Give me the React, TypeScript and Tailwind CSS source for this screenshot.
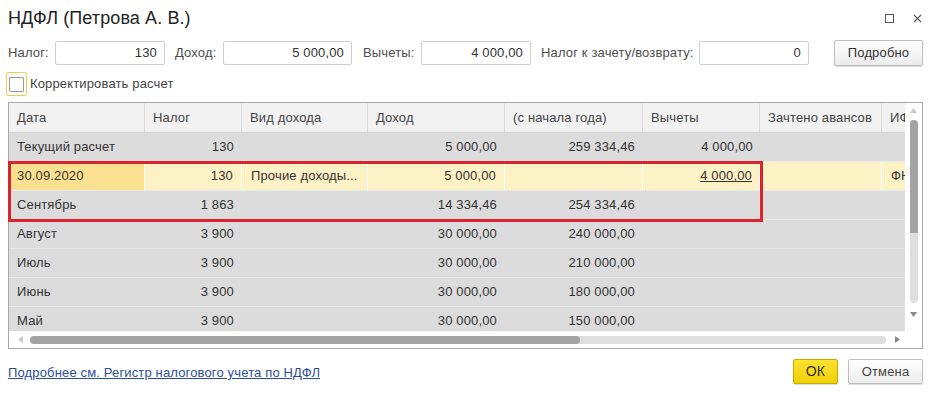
import React from "react";

type Row = {
  date: string;
  tax: string;
  kind?: string;
  income: string;
  ytd?: string;
  deductions?: string;
  advance?: string;
  ifns?: string;
  selected?: boolean;
};

const rows: Row[] = [
  { date: "Текущий расчет", tax: "130", income: "5 000,00", ytd: "259 334,46", deductions: "4 000,00" },
  { date: "30.09.2020", tax: "130", kind: "Прочие доходы...", income: "5 000,00", deductions: "4 000,00", ifns: "ФНС", selected: true },
  { date: "Сентябрь", tax: "1 863", income: "14 334,46", ytd: "254 334,46" },
  { date: "Август", tax: "3 900", income: "30 000,00", ytd: "240 000,00" },
  { date: "Июль", tax: "3 900", income: "30 000,00", ytd: "210 000,00" },
  { date: "Июнь", tax: "3 900", income: "30 000,00", ytd: "180 000,00" },
  { date: "Май", tax: "3 900", income: "30 000,00", ytd: "150 000,00" },
];

const headers = [
  { label: "Дата", w: "w-[136px]" },
  { label: "Налог", w: "w-[97px]" },
  { label: "Вид дохода", w: "w-[126px]" },
  { label: "Доход", w: "w-[137px]" },
  { label: "(с начала года)", w: "w-[138px]" },
  { label: "Вычеты", w: "w-[117px]" },
  { label: "Зачтено авансов", w: "w-[122px]" },
  { label: "ИФНС", w: "flex-1" },
];

const Field = ({ value, w }: { value: string; w: string }) => (
  <div className={`${w} h-[24px] border border-[#cfcfcf] rounded-[2px] bg-white flex items-center justify-end pr-[7px] text-[#333]`}>
    {value}
  </div>
);

const TableRow = ({ r }: { r: Row }) => {
  const bg = r.selected ? "bg-[#fdf1c6]" : "bg-[#dcdcdc]";
  const div = r.selected ? "border-r border-white" : "";
  return (
    <div className={`flex shrink-0 h-[29px] border-b border-[#e8e8e8] ${bg} text-[#333]`}>
      <div className={`w-[136px] shrink-0 flex items-center pl-[8px] ${r.selected ? "bg-[#fbe08f]" : ""} ${div}`}>{r.date}</div>
      <div className={`w-[97px] shrink-0 flex items-center justify-end pr-[8px] ${div}`}>{r.tax}</div>
      <div className={`w-[126px] shrink-0 flex items-center pl-[9px] ${div}`}>{r.kind}</div>
      <div className={`w-[137px] shrink-0 flex items-center justify-end pr-[8px] ${div}`}>{r.income}</div>
      <div className={`w-[138px] shrink-0 flex items-center justify-end pr-[8px] ${div}`}>{r.ytd}</div>
      <div className={`w-[117px] shrink-0 flex items-center justify-end pr-[7px] ${div}`}>
        <span className={r.selected ? "underline" : ""}>{r.deductions}</span>
      </div>
      <div className={`w-[122px] shrink-0 flex items-center ${div}`}>{r.advance}</div>
      <div className="flex-1 flex items-center pl-[9px] overflow-hidden whitespace-nowrap">{r.ifns}</div>
    </div>
  );
};

export default function App() {
  return (
    <div className="w-[935px] h-[397px] bg-white flex flex-col pl-[8px] pr-[12px] font-['Liberation_Sans',Arial,sans-serif] text-[13px] tracking-[0.15px] overflow-hidden">
      {/* title */}
      <div className="h-[36px] flex items-center justify-between">
        <div className="text-[18px] text-[#222] tracking-[0.1px]">НДФЛ (Петрова А. В.)</div>
        <div className="flex items-center gap-[19px] pr-[1px] pt-[1px]">
          <div className="w-[9px] h-[9px] border border-[#555]" />
          <svg width="9" height="9" viewBox="0 0 9 9">
            <path d="M1 1 L8 8 M8 1 L1 8" stroke="#555" strokeWidth="1.1" />
          </svg>
        </div>
      </div>

      {/* totals */}
      <div className="mt-[4px] h-[26px] flex items-center text-[#4d4d4d] whitespace-nowrap">
        <span className="w-[47px]">Налог:</span>
        <Field value="130" w="w-[110px]" />
        <span className="ml-[10px] w-[48px]">Доход:</span>
        <Field value="5 000,00" w="w-[129px]" />
        <span className="ml-[11px] w-[58px]">Вычеты:</span>
        <Field value="4 000,00" w="w-[110px]" />
        <span className="ml-[10px] w-[158px]">Налог к зачету/возврату:</span>
        <Field value="0" w="w-[110px]" />
        <button className="ml-[25px] w-[89px] h-[26px] border border-[#bdbdbd] rounded-[2px] bg-gradient-to-b from-white to-[#ececec] text-[#333] shadow-[0_1px_1px_rgba(0,0,0,0.15)]">
          Подробно
        </button>
      </div>

      {/* checkbox */}
      <div className="mt-[6px] h-[24px] flex items-center -ml-[2px] text-[#444]">
        <div className="w-[21px] h-[24px] border border-[#f1cc4a] rounded-[2px] flex items-center justify-center">
          <div className="w-[15px] h-[15px] border border-[#9a9a9a] rounded-[1px] bg-white" />
        </div>
        <span className="ml-[3px]">Корректировать расчет</span>
      </div>

      {/* table */}
      <div className="mt-[6px] h-[247px] border border-[#a8a8a8] flex flex-col relative">
        <div className="flex h-[228px] shrink-0">
          <div className="flex-1 flex flex-col overflow-hidden">
            <div className="flex h-[30px] bg-[#f2f2f2] border-b border-[#d6d6d6] text-[#444] shrink-0">
              {headers.map((h, i) => (
                <div
                  key={h.label}
                  className={`${h.w} shrink-0 flex items-center pl-[8px] whitespace-nowrap overflow-hidden ${i < headers.length - 1 ? "border-r border-[#dddddd]" : ""}`}
                >
                  {h.label}
                </div>
              ))}
            </div>
            {rows.map((r) => (
              <TableRow key={r.date} r={r} />
            ))}
          </div>
          {/* vertical scrollbar */}
          <div className="w-[17px] shrink-0 bg-white flex flex-col items-center pt-[5px]">
            <svg width="7" height="5" viewBox="0 0 7 5"><path d="M3.5 0 L7 5 L0 5 Z" fill="#c8c8c8" /></svg>
            <div className="mt-[7px] w-[8px] flex flex-col">
              <div className="h-[117px] bg-[#a3a3a3] rounded-[4px]" />
              <div className="h-[70px] bg-[#dedede] rounded-b-[4px] -mt-[4px]" />
            </div>
            <svg className="mt-[9px]" width="7" height="5" viewBox="0 0 7 5"><path d="M0 0 L7 0 L3.5 5 Z" fill="#8a8a8a" /></svg>
          </div>
        </div>
        {/* horizontal scrollbar */}
        <div className="h-[17px] flex items-center pl-[9px] pr-[22px] bg-white">
          <svg width="5" height="7" viewBox="0 0 5 7"><path d="M5 0 L5 7 L0 3.5 Z" fill="#c8c8c8" /></svg>
          <div className="ml-[7px] flex-1 h-[8px] bg-[#dedede] rounded-[4px] flex">
            <div className="w-[550px] h-[8px] bg-[#a3a3a3] rounded-[4px]" />
          </div>
          <svg className="ml-[9px]" width="5" height="7" viewBox="0 0 5 7"><path d="M0 0 L5 3.5 L0 7 Z" fill="#8a8a8a" /></svg>
        </div>
        {/* annotation frame */}
        <div className="absolute left-[-1px] top-[58px] w-[755px] h-[61px] border-[3px] border-[#d9232e] pointer-events-none" />
      </div>

      {/* footer */}
      <div className="mt-[10px] flex items-center justify-between">
        <a className="text-[#2b4e9b] underline mt-[3px]" href="#">
          Подробнее см. Регистр налогового учета по НДФЛ
        </a>
        <div className="flex gap-[10px]">
          <button className="w-[45px] h-[25px] border border-[#c9ac00] rounded-[2px] bg-gradient-to-b from-[#fbe22c] to-[#f2d000] text-[#333] text-[14px] shadow-[0_1px_1px_rgba(0,0,0,0.15)]">
            ОК
          </button>
          <button className="w-[75px] h-[25px] border border-[#bdbdbd] rounded-[2px] bg-gradient-to-b from-white to-[#ececec] text-[#444] shadow-[0_1px_1px_rgba(0,0,0,0.15)]">
            Отмена
          </button>
        </div>
      </div>
    </div>
  );
}
